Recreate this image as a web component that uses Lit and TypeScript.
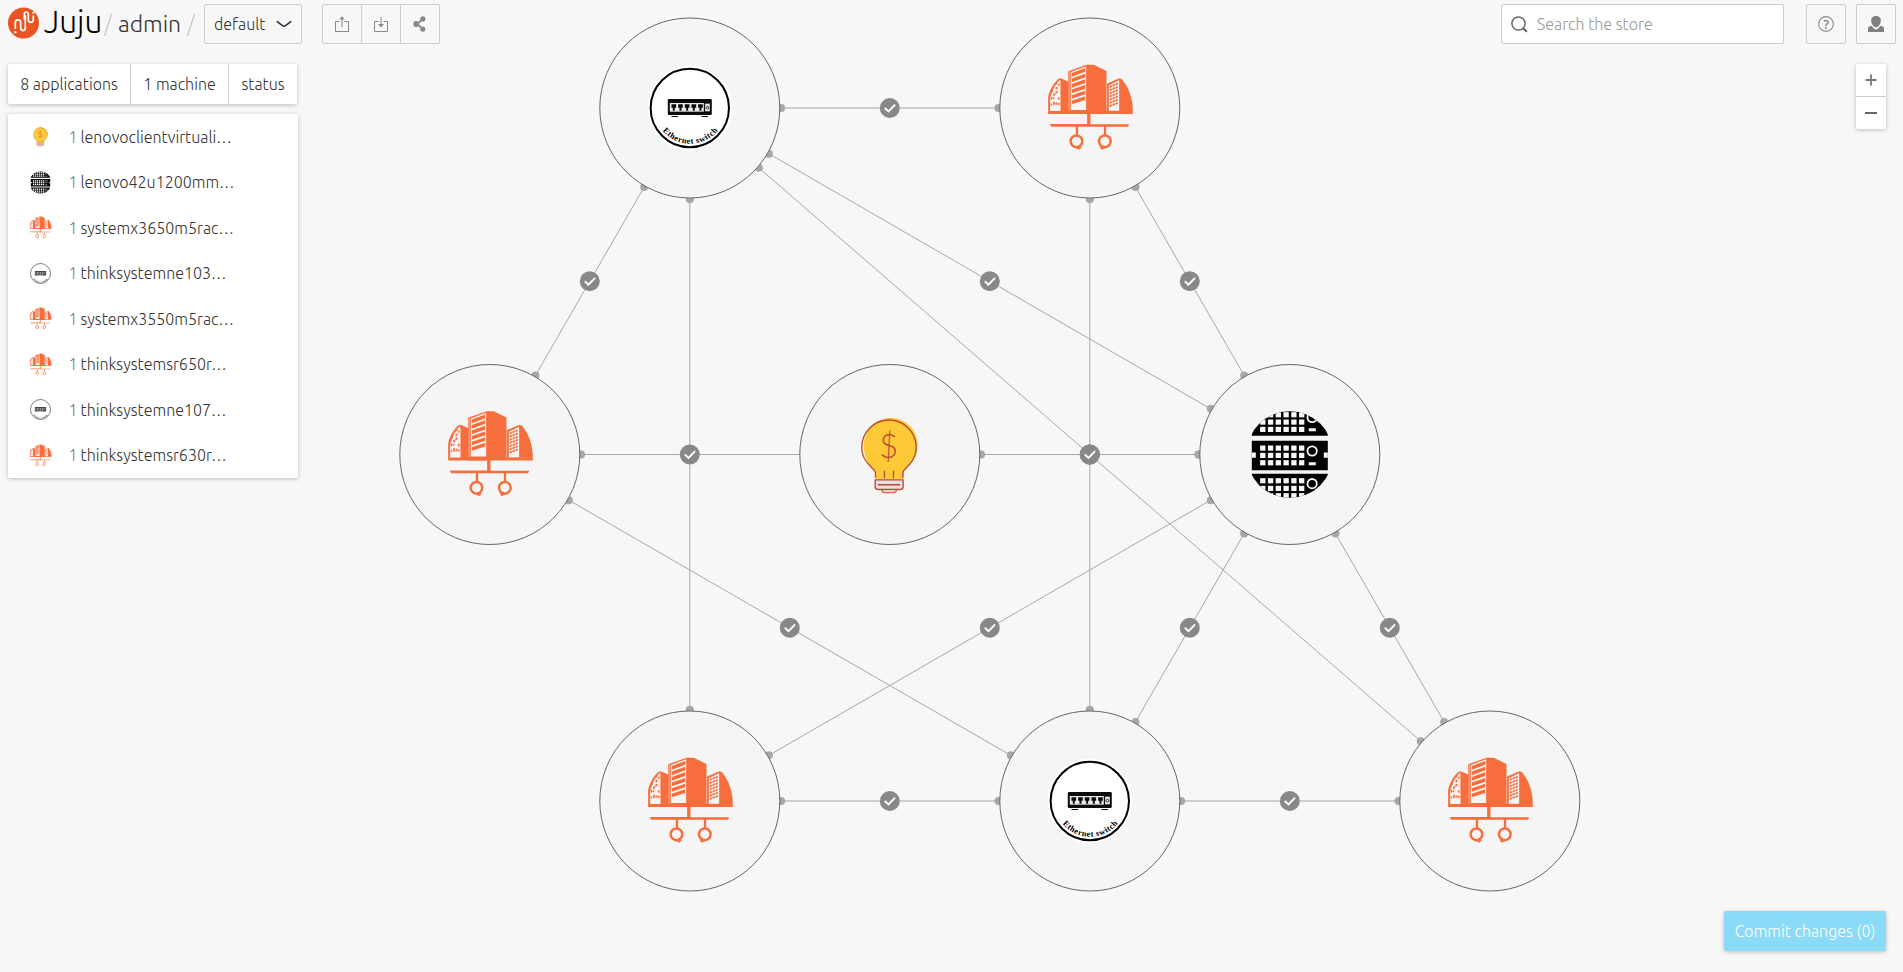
import { LitElement, html, svg, css } from "lit";
import { customElement } from "lit/decorators.js";

type Kind = "city" | "switch" | "rack" | "bulb";

interface AppNode {
  x: number;
  y: number;
  kind: Kind;
}

const NODES: AppNode[] = [
  { x: 689.8, y: 108, kind: "switch" },
  { x: 1089.8, y: 108, kind: "city" },
  { x: 489.8, y: 454.5, kind: "city" },
  { x: 889.8, y: 454.5, kind: "bulb" },
  { x: 1289.8, y: 454.5, kind: "rack" },
  { x: 689.8, y: 801, kind: "city" },
  { x: 1089.8, y: 801, kind: "switch" },
  { x: 1489.8, y: 801, kind: "city" },
];

const RELATIONS: [number, number][] = [
  [0, 1], [0, 2], [0, 5], [0, 4], [0, 7], [1, 6], [1, 4], [2, 4],
  [3, 4], [2, 6], [4, 5], [4, 6], [4, 7], [5, 6], [6, 7],
];

const APPS: { name: string; kind: Kind }[] = [
  { name: "lenovoclientvirtuali…", kind: "bulb" },
  { name: "lenovo42u1200mm…", kind: "rack" },
  { name: "systemx3650m5rac…", kind: "city" },
  { name: "thinksystemne103…", kind: "switch" },
  { name: "systemx3550m5rac…", kind: "city" },
  { name: "thinksystemsr650r…", kind: "city" },
  { name: "thinksystemne107…", kind: "switch" },
  { name: "thinksystemsr630r…", kind: "city" },
];

const ORANGE = "#f76e3c";

const city = () => svg`
  <g fill=${ORANGE}>
    <path d="M175 312V262C179 240 190 222 205 207L213 205L238 216V303H290V312Z"/>
    <path d="M181 303V268C184 247 192 230 207 212L212 210V303Z" fill="#f5f5f5"/>
    <path d="M197 217l6-3v8l-6 3zM197 232l6-2v7l-6 2zM205 222l4-2v7l-4 2zM183 240l6-3v8l-6 3zM190 251l6-2v7l-6 2zM197 244l6-2v7l-6 2zM204 262h5v7h-5zM183 262l5-2v8l-5 2zM190 275h5v10h-5zM183 281l4-1v7h-4zM204 278h5v7h-5zM197 277h5v7h-5zM190 262h4v6h-4z"/>
    <path d="M235 184L290 164H312L350 183V303H429V312H235Z"/>
    <path d="M243 186L289 169V300H243Z" fill="#f5f5f5"/>
    <path d="M238 184V303" stroke="#f5f5f5" stroke-width="1.5"/>
    ${[0, 1, 2, 3, 4, 5].map((i) => svg`<path d=${`M246 ${189 + i * 16.6}L286 ${174 + i * 17}V${185 + i * 17}L246 ${200 + i * 16.6}Z`}/>`)}
    <path d="M351 221L388 205L396 207C417 232 429 265 429 304H351Z"/>
    <path d="M357 226L388 211V302H357Z" fill="#f5f5f5"/>
    ${[0, 1, 2, 3, 4, 5, 6].map((r) => [0, 1, 2].map((c) => svg`<path d=${`M${359 + c * 9} ${228 + r * 9.6 - c * 3.4}l7 -3v6l-7 3z`}/>`))}
    <path d="M292 310H302V343H418L415 350H349V375H342V350H265V375H258V350H184L180 342H292Z"/>
    <path d="M258 414l11 5l8-9zM347 414l-11 5l-8-9z"/>
  </g>
  <circle cx="260" cy="394" r="17.5" fill="none" stroke=${ORANGE} stroke-width="7.5"/>
  <circle cx="345" cy="394" r="17.5" fill="none" stroke=${ORANGE} stroke-width="7.5"/>
`;

const ethernet = (uid: string) => svg`
  <circle cx="300" cy="294" r="127" fill="#fff"/>
  <circle cx="300" cy="294" r="117.5" fill="#fff" stroke="#000" stroke-width="6"/>
  <rect x="234" y="267" width="132" height="48" rx="4" fill="#0b0d0d"/>
  <rect x="240" y="279" width="102" height="26" fill="#e8eaea"/>
  ${[0, 1, 2, 3, 4].map((i) => svg`<path d=${`M${245 + i * 20} 283h14v10h-4v9h-6v-9h-4z`} fill="#0b0d0d"/>`)}
  <rect x="346" y="281" width="14" height="23" fill="#e8eaea"/>
  <circle cx="353" cy="293" r="4" fill="none" stroke="#0b0d0d" stroke-width="2.5"/>
  <path d="M245 319.5h20M335 319.5h20" stroke="#0b0d0d" stroke-width="3.5"/>
  <path id=${uid} d="M218 362A107 107 0 0 0 386 359" fill="none"/>
  <text class="arc"><textPath href=${"#" + uid} textLength="190" lengthAdjust="spacing">Ethernet switch</textPath></text>
`;

const COLS = [211, 234.3, 257.6, 281, 304.3, 327.6];

const rack = (uid: string) => svg`
  <clipPath id=${uid}><circle cx="300" cy="294" r="130"/></clipPath>
  <g clip-path=${`url(#${uid})`}>
    <path d="M186 160H414V238H186ZM186 253H414V341H186ZM186 352H414V428H186Z" fill="#000"/>
    <g fill="#f7f7f7">
      ${[167, 189, 211, 267, 289, 311, 365, 388, 410].map((y) => COLS.map((x) => svg`<rect x=${x} y=${y} width="16" height="15.5"/>`))}
      <path d="M186 288h12v16h-12zM402 288h12v16h-12zM357 215h21v9h-21zM357 317h21v9h-21z"/>
    </g>
    <g fill="none" stroke="#f7f7f7" stroke-width="5.5">
      <circle cx="367" cy="183" r="14"/>
      <circle cx="367" cy="283.5" r="14"/>
      <circle cx="367" cy="381.5" r="14"/>
    </g>
  </g>
`;

const bulb = () => svg`
  <path d="M258 368V344C240 334 222 306 222 266A81 82 0 0 1 384 266C384 300 363 326 342 342V368Z" fill="#fec937"/>
  <g fill="none" stroke="#b84a32" stroke-width="4">
    <path d="M257 364V349C257 336 216 321 216 272A81.500 81.500 0 0 1 379 272C379 321 339 336 339 349V364M284 343V365M311 343V365"/>
    <path d="M256 370H340V391Q340 399 332 399H264Q256 399 256 391Z" fill="#e4dfe3"/>
    <path d="M264 384.500H331" stroke-width="4.500"/>
    <path d="M276 400Q277 408 285 408H311Q319 408 320 400" stroke="#d8694f"/>
  </g>
  <text class="dollar" x="297" y="305" text-anchor="middle">$</text>
`;

function glyph(kind: Kind, uid: string) {
  switch (kind) {
    case "city": return city();
    case "switch": return ethernet(uid);
    case "rack": return rack(uid);
    default: return bulb();
  }
}

@customElement("app-root")
export class AppRoot extends LitElement {
  static styles = css`
    :host {
      display: block;
      position: relative;
      width: 100%;
      height: 100vh;
      overflow: hidden;
      background: #f7f7f7;
      color: #333;
      font-family: Ubuntu, "Noto Sans", "Open Sans", sans-serif;
      font-weight: 300;
      font-size: 16px;
      letter-spacing: 0;
    }
    * { box-sizing: border-box; }
    svg { display: block; }
    .canvas { position: absolute; left: 0; top: 0; }
    .arc { font: 700 25px "Liberation Serif", serif; letter-spacing: 0; fill: #000; }
    .dollar { font: 300 98px Lato, sans-serif; letter-spacing: 0; fill: #b84a32; }
    .overlay {
      position: relative;
      height: 100%;
      display: flex;
      flex-direction: column;
      justify-content: space-between;
      padding: 4px 7px 21px 8px;
    }
    header { display: flex; height: 40px; align-items: center; }
    header > * { flex-shrink: 0; }
    .logo { margin-top: -3px; }
    .word {
      font: 300 31.5px/40px Ubuntu, Lato, sans-serif;
      color: #000;
      width: 65px;
      padding-left: 5px;
      margin-top: -4px;
      white-space: nowrap;
    }
    .slash { width: 8px; height: 22px; margin-top: 1px; }
    .user { font-size: 23px; width: 61px; margin: -2px 8px 0 6px; letter-spacing: 0; }
    .box {
      height: 40px;
      border: 1px solid #cdcdcd;
      border-radius: 2px;
      display: flex;
      align-items: center;
      justify-content: center;
    }
    .model { width: 98px; margin-left: 9px; padding: 0 9px; justify-content: space-between; }
    .tools { width: 118px; margin-left: 20px; }
    .tool {
      flex: 1;
      height: 38px;
      display: flex;
      align-items: center;
      justify-content: center;
    }
    .tool + .tool { border-left: 1px solid #cdcdcd; }
    .search {
      margin-left: auto;
      width: 283px;
      background: #fff;
      justify-content: flex-start;
      padding-left: 9px;
      gap: 9px;
      color: #999;
    }
    .help { width: 40px; margin-left: 22px; }
    .profile { width: 40px; margin-left: 10px; }
    .row { display: flex; justify-content: space-between; align-items: flex-start; margin-top: 20px; }
    .card { background: #fff; border-radius: 2px; box-shadow: 0 1px 4px rgba(0, 0, 0, 0.24); }
    .tabs { display: flex; height: 40px; width: 289px; line-height: 40px; }
    .tab { text-align: center; white-space: nowrap; width: 122px; }
    .tab + .tab { border-left: 1px solid #cdcdcd; width: 98px; }
    .tab:last-child { width: 69px; }
    .list { width: 290px; margin-top: 10px; }
    .app { display: flex; height: 45.5px; align-items: center; padding-left: 20.5px; white-space: nowrap; }
    .count { width: 12px; margin-left: 17px; color: #777; font-weight: 300; }
    .zoom { width: 30px; margin-right: 10px; }
    .step { height: 32px; display: flex; align-items: center; justify-content: center; }
    .step + .step { border-top: 1px solid #cdcdcd; height: 33px; }
    .commit {
      align-self: flex-end;
      width: 162px;
      height: 40px;
      margin-right: 10px;
      line-height: 40px;
      text-align: center;
      background: #8bdaf7;
      color: #fff;
      white-space: nowrap;
    }
  `;

  private relation(a: AppNode, b: AppNode) {
    const dx = b.x - a.x;
    const dy = b.y - a.y;
    const len = Math.hypot(dx, dy);
    const ux = (dx / len) * 91.3;
    const uy = (dy / len) * 91.3;
    return svg`
      <path d=${`M${a.x} ${a.y}L${b.x} ${b.y}`} stroke="#a7a7a7" stroke-width="1"/>
      <circle cx=${a.x + ux} cy=${a.y + uy} r="4" fill="#a7a7a7"/>
      <circle cx=${b.x - ux} cy=${b.y - uy} r="4" fill="#a7a7a7"/>
    `;
  }

  private badge(a: AppNode, b: AppNode) {
    const x = (a.x + b.x) / 2;
    const y = (a.y + b.y) / 2;
    return svg`
      <g transform=${`translate(${x} ${y})`}>
        <circle r="10" fill="#888"/>
        <path d="M-5 0L-1.300 3.500L5.300 -3.300" fill="none" stroke="#fff" stroke-width="1.900"/>
      </g>
    `;
  }

  private slash() {
    return html`<svg class="slash" viewBox="0 0 8 22"><path d="M7.5 0L.5 22" stroke="#c4c4c4" stroke-width="1.200"/></svg>`;
  }

  private header() {
    return html`
      <header>
        <svg class="logo" width="31" height="32" viewBox="8 6 31 32">
          <circle cx="23.5" cy="22" r="15.500" fill="#e95420"/>
          <path d="M15.300 28V21.500a2.700 2.700 0 0 1 5.400 0V27.300a2.300 2.300 0 0 0 4.600 0V14.200M24.300 19V13a2 2 0 0 1 4 0V18.800a2.500 2.500 0 0 0 5 0V14.500" fill="none" stroke="#fff" stroke-width="1.700"/>
          <circle cx="15.300" cy="31.200" r="1.200" fill="#fff"/>
          <circle cx="33.300" cy="11.800" r="1.100" fill="#fff"/>
        </svg>
        <span class="word">Juju</span>
        ${this.slash()}
        <span class="user">admin</span>
        ${this.slash()}
        <div class="box model">
          <span>default</span>
          <svg width="16" height="8" viewBox="0 0 16 8"><path d="M.8 1.400L6.500 5.600Q8 6.600 9.500 5.600L15.200 1.400" fill="none" stroke="#333" stroke-width="1.700"/></svg>
        </div>
        <div class="box tools">
          <span class="tool">
            <svg width="14" height="16" viewBox="0 0 14 16" fill="none" stroke="#888"><path d="M4.500 5.500H.5V15.500H13.500V5.500H9.500M7 11V1.500"/><path d="M4.300 3.500L7 .3L9.700 3.500Z" fill="#888" stroke="none"/></svg>
          </span>
          <span class="tool">
            <svg width="14" height="16" viewBox="0 0 14 16" fill="none" stroke="#888"><path d="M4.500 5.500H.5V15.500H13.500V5.500H9.500M7 1V10"/><path d="M4 8L7 11.500L10 8Z" fill="#888" stroke="none"/></svg>
          </span>
          <span class="tool">
            <svg width="14" height="16" viewBox="0 0 14 16"><path d="M10 3L4 8L10 13" fill="none" stroke="#888" stroke-width="1.800"/><g fill="#888"><circle cx="3.200" cy="8" r="2.900"/><circle cx="9.800" cy="2.900" r="2.600"/><circle cx="9.800" cy="13.100" r="2.600"/></g></svg>
          </span>
        </div>
        <div class="box search">
          <svg width="17" height="17" viewBox="0 0 17 17" fill="none" stroke="#666"><circle cx="7.500" cy="7.500" r="6.600" stroke-width="1.500"/><path d="M11.800 11.800L15.800 15.800" stroke-width="2.200"/></svg>
          <span>Search the store</span>
        </div>
        <div class="box help">
          <svg width="16" height="16" viewBox="0 0 16 16" fill="none" stroke="#888"><circle cx="8" cy="8" r="7.400" stroke-width="1.100"/><path d="M5.900 5.200Q8 3.700 9.600 5Q10.800 6.800 8.900 8Q7.800 8.800 7.900 10" stroke-width="1.500"/><circle cx="7.900" cy="12" r="1" fill="#888" stroke="none"/></svg>
        </div>
        <div class="box profile">
          <svg width="16" height="16" viewBox="0 0 16 16" fill="#808080"><path d="M8 0C11.500 0 13.200 2.300 12.800 5.500C12.300 8.500 10 11.300 8 11.300S3.700 8.500 3.200 5.500C2.800 2.300 4.500 0 8 0Z"/><path d="M0 16V12.200Q0 10.800 3.800 9.800Q6 13.600 8 13.600T12.200 9.800Q16 10.800 16 12.200V16Z"/></svg>
        </div>
      </header>
    `;
  }

  render() {
    return html`
      <svg class="canvas" width="1903" height="972" viewBox="0 0 1903 972">
        ${RELATIONS.map(([a, b]) => this.relation(NODES[a], NODES[b]))}
        ${RELATIONS.map(([a, b]) => this.badge(NODES[a], NODES[b]))}
        ${NODES.map((n, i) => svg`
          <circle cx=${n.x} cy=${n.y} r="90" fill="#f5f5f5" stroke="#666" stroke-width="1"/>
          <svg x=${n.x - 45} y=${n.y - 45} width="90" height="90" viewBox="165 159 270 270">${glyph(n.kind, `node-${i}`)}</svg>
        `)}
      </svg>
      <div class="overlay">
        <div>
          ${this.header()}
          <div class="row">
            <div>
              <div class="card tabs">
                <span class="tab">8 applications</span>
                <span class="tab">1 machine</span>
                <span class="tab">status</span>
              </div>
              <div class="card list">
                ${APPS.map((a, i) => html`
                  <div class="app">
                    <svg width="23" height="23" viewBox="165 159 270 270">${glyph(a.kind, `app-${i}`)}</svg>
                    <span class="count">1</span>
                    <span>${a.name}</span>
                  </div>
                `)}
              </div>
            </div>
            <div class="card zoom">
              <div class="step"><svg width="12" height="12" viewBox="0 0 12 12"><path d="M.5 6H11.500M6 .5V11.500" stroke="#777" stroke-width="1.800"/></svg></div>
              <div class="step"><svg width="12" height="12" viewBox="0 0 12 12"><path d="M0 6H12" stroke="#666" stroke-width="2"/></svg></div>
            </div>
          </div>
        </div>
        <div class="card commit">Commit changes (0)</div>
      </div>
    `;
  }
}
